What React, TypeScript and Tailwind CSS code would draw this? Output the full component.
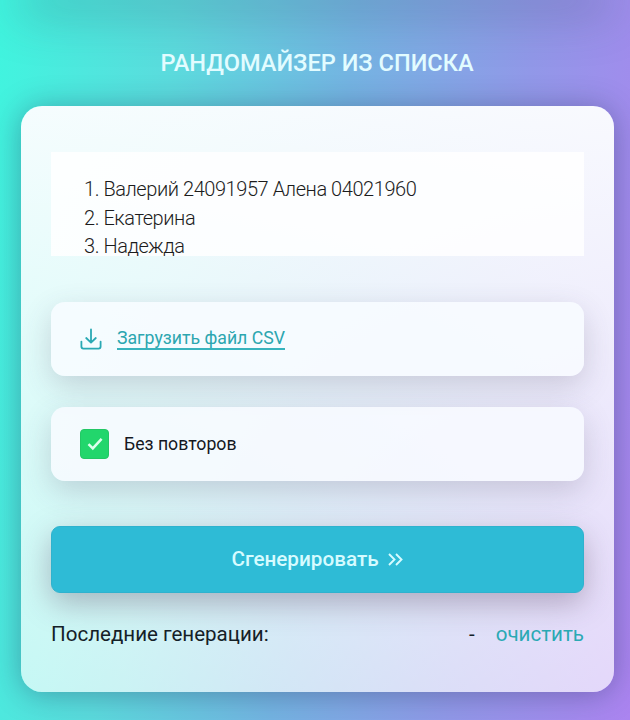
import React, { useState } from 'react';

const items = ['Валерий 24091957 Алена 04021960', 'Екатерина', 'Надежда'];

function DownloadIcon() {
  return (
    <svg
      className="h-[22px] w-[22px] shrink-0"
      viewBox="0 0 22 22"
      fill="none"
      stroke="#2aa9b4"
      strokeWidth="1.8"
      strokeLinecap="round"
      strokeLinejoin="round"
    >
      <path d="M11 1.5v12.8M6.2 10l4.8 4.6 4.8-4.6M1.4 13.6v5a2 2 0 0 0 2 2h15.2a2 2 0 0 0 2-2v-5" />
    </svg>
  );
}

export default function App() {
  const [unique, setUnique] = useState(true);

  return (
    <div className="h-[720px] w-[630px] overflow-hidden bg-[linear-gradient(97deg,#40f5df_0%,#5bdbdd_25%,#74b4e2_50%,#9198e8_75%,#ab84f0_100%)] font-['Roboto',sans-serif]">
      <div className="mx-[30px] h-0 shadow-[0_0_50px_12px_rgba(50,60,90,0.34)]" />
      <h1 className="flex h-[106px] items-center justify-center pt-[21px] pl-[4px] text-[23.6px] font-medium text-[#e2fcff]">
        РАНДОМАЙЗЕР ИЗ СПИСКА
      </h1>

      <main className="relative ml-[21px] h-[586px] w-[593px] rounded-[21px] shadow-[0_2px_30px_rgba(30,40,80,0.36)]">
        <div className="h-full rounded-[21px] bg-[linear-gradient(97deg,#40f5df_0%,#5bdbdd_25%,#74b4e2_50%,#9198e8_75%,#ab84f0_100%)]">
          <div className="flex h-full flex-col rounded-[21px] bg-linear-to-b from-[#fbfdff]/97 to-white/68 px-[30px] pt-[46px]">
            <div className="h-[104px] overflow-hidden bg-white/85 pt-[23px] pl-[33px] text-[20px] leading-[28.5px] font-light tracking-[-0.44px] text-[#1c1c1c]">
              {items.map((item, i) => (
                <div key={item}>
                  {i + 1}. {item}
                </div>
              ))}
            </div>

            <div className="mt-[46px] flex h-[74px] items-center gap-[15px] rounded-[14px] bg-[#f8fcff]/85 pl-[29px] shadow-[0_10px_30px_rgba(70,60,90,0.2)]">
              <DownloadIcon />
              <a href="#" className="border-b-2 border-[#38b3bd] text-[17.7px] leading-[19px] text-[#2ca6b0]">
                Загрузить файл CSV
              </a>
            </div>

            <label className="mt-[31px] flex h-[74px] items-center gap-[15px] rounded-[14px] bg-[#f8faff]/85 pl-[29px] shadow-[0_10px_30px_rgba(70,60,90,0.2)]">
              <input
                type="checkbox"
                className="sr-only"
                checked={unique}
                onChange={e => setUnique(e.target.checked)}
              />
              <span className="flex h-[30px] w-[29px] items-center justify-center rounded-[4px] border border-[#23c765] bg-[#22d66c]">
                {unique && (
                  <svg className="h-[14px] w-[16px]" viewBox="0 0 16 14" fill="none" stroke="#dcffed" strokeWidth="2.5">
                    <path d="M1.5 7.2l4.3 4.2L14.6 1.8" />
                  </svg>
                )}
              </span>
              <span className="text-[17.7px] text-[#15181f]">Без повторов</span>
            </label>

            <button className="mt-[45px] flex h-[67px] shrink-0 items-center justify-center gap-[9px] rounded-[9px] border border-[#2fb2ce] bg-[#2ebbd6] pr-px text-[20.7px] font-medium text-[#d6fbff] shadow-[0_10px_30px_rgba(80,55,85,0.34)]">
              Сгенерировать
              <svg className="h-[13px] w-[15px]" viewBox="0 0 15 13" fill="none" stroke="currentColor" strokeWidth="1.9">
                <path d="M1 1l5.5 5.5L1 12M8 1l5.5 5.5L8 12" />
              </svg>
            </button>

            <div className="mt-[27px] flex items-center text-[20.55px] leading-[28px] text-[#142027]">
              <span>Последние генерации:</span>
              <span className="ml-auto">-</span>
              <button className="ml-[21px] text-[#2aa9b4]">очистить</button>
            </div>
          </div>
        </div>
      </main>
    </div>
  );
}
